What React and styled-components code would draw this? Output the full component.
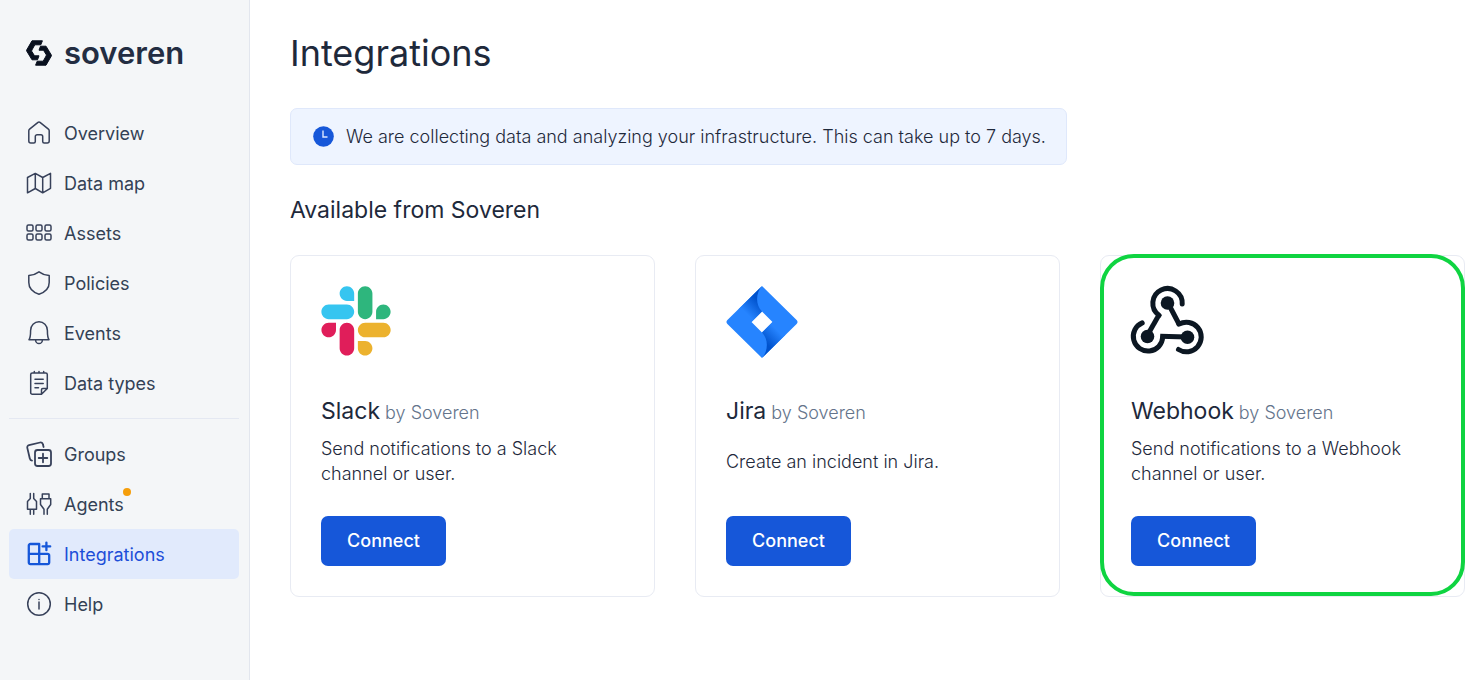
import React from "react";
import styled, { createGlobalStyle } from "styled-components";

const GlobalStyle = createGlobalStyle`
  *, *::before, *::after { box-sizing: border-box; }
  body {
    margin: 0;
    background: #ffffff;
    color: #1e293b;
    font-family: Inter, "Liberation Sans", sans-serif;
    font-size: 18px;
  }
  h1, h2, h3, p, ul { margin: 0; padding: 0; font-weight: 400; }
`;

const Layout = styled.div`
  display: flex;
  min-height: 100vh;
`;

const Sidebar = styled.aside`
  flex: 0 0 250px;
  padding: 36px 10px 20px 9px;
  background: #f4f6f8;
  border-right: 1px solid #e2e6ee;
`;

const Brand = styled.a`
  display: flex;
  align-items: center;
  gap: 11px;
  height: 34px;
  margin-bottom: 38px;
  padding-left: 16px;
  color: #232d42;
  font-size: 31px;
  font-weight: 600;
  line-height: 34px;
  text-decoration: none;
`;

const NavList = styled.ul`
  list-style: none;

  & + & {
    margin-top: 10px;
    padding-top: 10px;
    border-top: 1px solid #e4e8f2;
  }
`;

const NavLink = styled.a`
  display: flex;
  align-items: center;
  gap: 11px;
  height: 50px;
  padding-left: 16px;
  border-radius: 5px;
  background: ${(p) => (p.$active ? "#e1eafc" : "transparent")};
  color: ${(p) => (p.$active ? "#1d4ed8" : "#334155")};
  line-height: 24px;
  text-decoration: none;

  svg { color: ${(p) => (p.$active ? "#1657d9" : "#37415a")}; }
`;

const NavLabel = styled.span`
  position: relative;
  padding-top: 2px;
`;

const Dot = styled.span`
  position: absolute;
  top: -3px;
  right: -7px;
  width: 8px;
  height: 8px;
  border-radius: 50%;
  background: #f59e0b;
`;

const Main = styled.main`
  flex: 1;
  min-width: 0;
  padding: 32px 15px 40px 40px;
`;

const PageTitle = styled.h1`
  margin-bottom: 34px;
  font-size: 36px;
  line-height: 42px;
`;

const Banner = styled.div`
  display: flex;
  align-items: center;
  gap: 12px;
  width: fit-content;
  padding: 15px 20px 15px 22px;
  border: 1px solid #dfe8fb;
  border-radius: 7px;
  background: #eef4ff;
  font-weight: 350;
  line-height: 25px;
`;

const SectionTitle = styled.h2`
  margin: 30px 0;
  font-size: 23px;
  line-height: 30px;
`;

const CardGrid = styled.div`
  display: grid;
  grid-template-columns: repeat(3, 1fr);
  gap: 40px;
`;

const Card = styled.article`
  position: relative;
  display: flex;
  flex-direction: column;
  align-items: flex-start;
  padding: 30px;
  border: 1px solid #e8ebf3;
  border-radius: 9px;
`;

const Highlight = styled.span`
  position: absolute;
  inset: -2px -1px 0;
  border: 4px solid #0fd441;
  border-radius: 34px;
  pointer-events: none;
`;

const LogoBox = styled.div`
  height: 70px;
  margin-bottom: 40px;

  svg { display: block; overflow: visible; }
`;

const CardTitle = styled.h3`
  margin-bottom: 10px;
  font-size: 23px;
  line-height: 30px;
`;

const Vendor = styled.small`
  color: #64748b;
  font-size: 18px;
  font-weight: 300;
  line-height: 20px;
`;

const Description = styled.p`
  display: flex;
  align-items: center;
  min-height: 50px;
  max-width: 280px;
  margin-bottom: 30px;
  font-weight: 300;
  line-height: 25px;
`;

const ConnectButton = styled.button`
  width: 125px;
  height: 50px;
  padding: 0;
  border: 0;
  border-radius: 7px;
  background: #1657d9;
  color: #ffffff;
  font: 500 18px/24px Inter, "Liberation Sans", sans-serif;
  cursor: pointer;
`;

const Icon = ({ children, weight = 1.5 }) => (
  <svg
    width="28"
    height="28"
    viewBox="0 0 28 28"
    fill="none"
    stroke="currentColor"
    strokeWidth={weight}
    strokeLinecap="round"
    strokeLinejoin="round"
    aria-hidden="true"
  >
    {children}
  </svg>
);

const HomeIcon = () => (
  <Icon>
    <path d="M3.8 11.8c0-.7.3-1.2.8-1.6l8.4-6.9a1.6 1.6 0 0 1 2 0l8.4 6.9c.5.4.8.9.8 1.6V22a2 2 0 0 1-2 2h-3a1.5 1.5 0 0 1-1.5-1.5v-5a1.8 1.8 0 0 0-1.8-1.8h-3.8a1.8 1.8 0 0 0-1.8 1.8v5A1.5 1.5 0 0 1 8.8 24h-3a2 2 0 0 1-2-2z" />
  </Icon>
);

const MapIcon = () => (
  <Icon>
    <path d="M2.5 8.5 10.3 4.4 17.7 8.5 25.5 4.4V19.3L17.7 23.8 10.3 19.5 2.5 23.8zM10.3 4.4V19.5M17.7 8.5V23.8" />
  </Icon>
);

const AssetsIcon = () => (
  <Icon>
    {[2, 11, 20].map((x) =>
      [6, 15].map((y) => <rect key={`${x}-${y}`} x={x} y={y} width="6" height="6" rx="1.5" />)
    )}
  </Icon>
);

const ShieldIcon = () => (
  <Icon>
    <path d="M14 2.8C11 5 7.5 6.3 3.8 6.6V13.5C3.8 19 8 23.2 14 25.3 20 23.2 24.2 19 24.2 13.5V6.6C20.5 6.3 17 5 14 2.8z" />
  </Icon>
);

const BellIcon = () => (
  <Icon>
    <path d="M4 20.7C5.6 18.5 5.6 16 5.6 11.5a8.4 8.7 0 0 1 16.8 0C22.4 16 22.4 18.5 24 20.7zM10.6 21a3.4 3.6 0 0 0 6.8 0" />
  </Icon>
);

const NotesIcon = () => (
  <Icon>
    <path d="M16.5 25.3H7.3a1.6 1.6 0 0 1-1.6-1.6V5.6A1.6 1.6 0 0 1 7.3 4H20.7a1.6 1.6 0 0 1 1.6 1.6V19.5zM16.5 25V20.8a1.3 1.3 0 0 1 1.3-1.3h4.3M9.3 4V2.6M14 4V2.6M18.7 4V2.6M10 10.2h8.2M10 14.5h8.2M10 18.7h3.5" />
  </Icon>
);

const GroupsIcon = () => (
  <Icon weight={1.8}>
    <rect x="10" y="10" width="16" height="16" rx="2.5" />
    <path d="M18 13.7v8.6M13.7 18h8.6M18.6 7 17.9 4.3A2.3 2.3 0 0 0 15.1 2.5L4 5.1A2.3 2.3 0 0 0 2.3 7.9L4.8 18.5C5.1 19.7 6 20.5 7 20.6" />
  </Icon>
);

const PlugsIcon = () => (
  <Icon>
    <path d="M5.3 3.5V8.5L2.5 11.5V19.3H11.5V11.5L8.7 8.5V3.5M5.3 19.5v4.8M8.7 19.5v4.8M17.3 8.5V4H24V8.5M15.5 8.7H25.7V14.5L22.3 19.3V24.3M15.5 8.7V14.5L19 19.3V24.3" />
  </Icon>
);

const IntegrationsIcon = () => (
  <Icon weight={2.3}>
    <path d="M14.2 4H5.3A1.5 1.5 0 0 0 3.8 5.5V22.6a1.5 1.5 0 0 0 1.5 1.5H22.7a1.5 1.5 0 0 0 1.5-1.5V15.4a1.5 1.5 0 0 0-1.5-1.5H3.8M14.2 4V24M21.4 2.6v7.6M17.6 6.4h7.6" />
  </Icon>
);

const HelpIcon = () => (
  <Icon>
    <circle cx="14" cy="14" r="11.3" />
    <path d="M14 12v7M14 9.4v.1" />
  </Icon>
);

const BrandMark = () => (
  <svg
    width="28"
    height="28"
    viewBox="0 0 28 28"
    fill="#080f1e"
    stroke="#080f1e"
    strokeWidth="1"
    strokeLinejoin="round"
    aria-hidden="true"
  >
    <path d="M7 1.8H17.4L15.8 5.8H9.8L6.8 11.200V12.400L9.500 16.800H14L12.500 20.800H7L1.700 12V11z" />
    <path d="M21 26.200H10.600L12.200 22.200H18.200L21.200 16.800V15.600L18.500 11.200H14L15.500 7.200H21L26.300 16V17z" />
  </svg>
);

const ClockIcon = () => (
  <svg width="21" height="21" viewBox="0 0 21 21" aria-hidden="true">
    <circle cx="10.5" cy="10.5" r="10.3" fill="#1657d9" />
    <path d="M10 4.5V11H14.5" fill="none" stroke="#dbe7ff" strokeWidth="1.4" />
  </svg>
);

const SlackLogo = () => (
  <svg width="70" height="70" viewBox="0 0 127 127" role="img" aria-label="Slack">
    <path fill="#E01E5A" d="M27.2 80c0 7.3-5.9 13.2-13.2 13.2S.8 87.3.8 80s5.9-13.2 13.2-13.2h13.2zM33.8 80c0-7.3 5.9-13.2 13.2-13.2s13.2 5.9 13.2 13.2v33c0 7.3-5.9 13.2-13.2 13.2s-13.2-5.9-13.2-13.2z" />
    <path fill="#36C5F0" d="M47 27c-7.3 0-13.2-5.9-13.2-13.2S39.7.6 47 .6s13.2 5.9 13.2 13.2V27zM47 33.7c7.3 0 13.2 5.9 13.2 13.2S54.3 60.1 47 60.1H13.9C6.6 60.1.7 54.2.7 46.9s5.9-13.2 13.2-13.2z" />
    <path fill="#2EB67D" d="M99.9 46.9c0-7.3 5.9-13.2 13.2-13.2s13.2 5.9 13.2 13.2-5.9 13.2-13.2 13.2H99.9zM93.3 46.9c0 7.3-5.9 13.2-13.2 13.2s-13.2-5.9-13.2-13.2V13.8C66.9 6.5 72.8.6 80.1.6s13.2 5.9 13.2 13.2z" />
    <path fill="#ECB22E" d="M80.1 99.8c7.3 0 13.2 5.9 13.2 13.2s-5.9 13.2-13.2 13.2-13.2-5.9-13.2-13.2V99.8zM80.1 93.2c-7.3 0-13.2-5.9-13.2-13.2s5.9-13.2 13.2-13.2h33.1c7.3 0 13.2 5.9 13.2 13.2s-5.9 13.2-13.2 13.2z" />
  </svg>
);

const JiraLogo = () => (
  <svg width="72" height="72" viewBox="0 0 72 72" role="img" aria-label="Jira">
    <defs>
      <linearGradient id="jira-top" gradientUnits="userSpaceOnUse" x1="34" y1="11" x2="19" y2="26">
        <stop offset="0.18" stopColor="#0052CC" />
        <stop offset="1" stopColor="#2684FF" />
      </linearGradient>
      <linearGradient id="jira-bottom" gradientUnits="userSpaceOnUse" x1="38" y1="61" x2="53" y2="46">
        <stop offset="0.18" stopColor="#0052CC" />
        <stop offset="1" stopColor="#2684FF" />
      </linearGradient>
    </defs>
    <path fill="#2684FF" fillRule="evenodd" d="M36 0 70.6 34.1a2.7 2.7 0 0 1 0 3.8L36 72 1.4 37.9a2.7 2.7 0 0 1 0-3.8zM36 25.5 25.5 36 36 46.5 46.5 36z" />
    <path fill="url(#jira-top)" d="M36 0C29.5 7 29.5 19 36 25.5L25.5 36 12.5 23.2z" />
    <path fill="url(#jira-bottom)" d="M36 72C42.5 65 42.5 53 36 46.5L46.5 36 59.5 48.8z" />
  </svg>
);

const WebhookLogo = () => (
  <svg width="74" height="70" viewBox="0 0 74 70" fill="none" stroke="#0c1722" strokeWidth="5" role="img" aria-label="Webhook">
    <path strokeLinecap="round" d="M51.2 18A14.7 14.7 0 1 0 28 29.2" />
    <path d="M28.5 28 16.5 49" />
    <path strokeLinecap="round" d="M11.2 36.9A14.7 14.7 0 1 0 31.7 51" />
    <path d="M29.2 50.2 56 51M37 17 48.5 39" />
    <path strokeLinecap="round" d="M48 38.2A14.8 14.8 0 1 1 47.5 63.500" />
    <g fill="#0c1722" stroke="none">
      <circle cx="36.5" cy="17" r="6.8" />
      <circle cx="16.5" cy="50.5" r="6.8" />
      <circle cx="56.5" cy="51.3" r="6.8" />
    </g>
  </svg>
);

const primaryNav = [
  { label: "Overview", icon: HomeIcon },
  { label: "Data map", icon: MapIcon },
  { label: "Assets", icon: AssetsIcon },
  { label: "Policies", icon: ShieldIcon },
  { label: "Events", icon: BellIcon },
  { label: "Data types", icon: NotesIcon },
];

const secondaryNav = [
  { label: "Groups", icon: GroupsIcon },
  { label: "Agents", icon: PlugsIcon, alert: true },
  { label: "Integrations", icon: IntegrationsIcon, active: true },
  { label: "Help", icon: HelpIcon },
];

const integrations = [
  { name: "Slack", logo: SlackLogo, text: "Send notifications to a Slack channel or user." },
  { name: "Jira", logo: JiraLogo, text: "Create an incident in Jira." },
  { name: "Webhook", logo: WebhookLogo, text: "Send notifications to a Webhook channel or user.", highlighted: true },
];

const NavSection = ({ items }) => (
  <NavList>
    {items.map(({ label, icon: Glyph, active, alert }) => (
      <li key={label}>
        <NavLink href="#" $active={active} aria-current={active ? "page" : undefined}>
          <Glyph />
          <NavLabel>
            {label}
            {alert && <Dot />}
          </NavLabel>
        </NavLink>
      </li>
    ))}
  </NavList>
);

export default function App() {
  return (
    <>
      <GlobalStyle />
      <Layout>
        <Sidebar>
          <Brand href="#">
            <BrandMark />
            soveren
          </Brand>
          <nav>
            <NavSection items={primaryNav} />
            <NavSection items={secondaryNav} />
          </nav>
        </Sidebar>
        <Main>
          <PageTitle>Integrations</PageTitle>
          <Banner role="status">
            <ClockIcon />
            We are collecting data and analyzing your infrastructure. This can take up to 7 days.
          </Banner>
          <SectionTitle>Available from Soveren</SectionTitle>
          <CardGrid>
            {integrations.map(({ name, logo: Logo, text, highlighted }) => (
              <Card key={name}>
                <LogoBox>
                  <Logo />
                </LogoBox>
                <CardTitle>
                  {name}
                  <Vendor> by Soveren</Vendor>
                </CardTitle>
                <Description>{text}</Description>
                <ConnectButton type="button">Connect</ConnectButton>
                {highlighted && <Highlight />}
              </Card>
            ))}
          </CardGrid>
        </Main>
      </Layout>
    </>
  );
}
